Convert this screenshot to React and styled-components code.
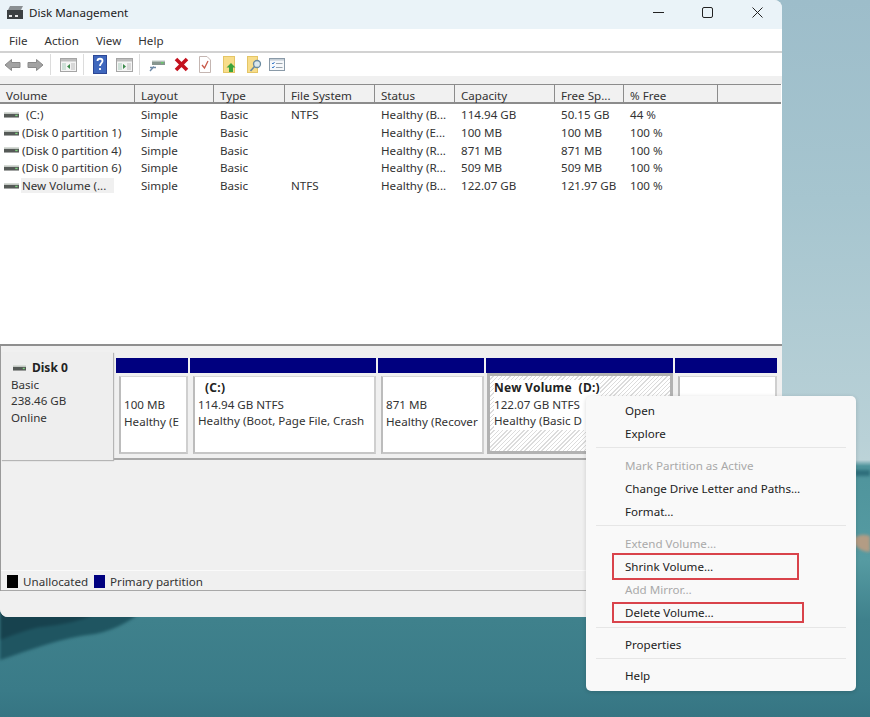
import React from 'react';
import styled, { createGlobalStyle } from 'styled-components';

const GlobalStyle = createGlobalStyle`
    html, body {
        margin: 0;
        padding: 0;
    }
    body {
        font-family: "Noto Sans", "Open Sans", "Liberation Sans", sans-serif;
        font-size: 11.6px;
        color: #222;
    }
`;

const Desktop = styled.div`
    position: relative;
    width: 870px;
    height: 717px;
    overflow: hidden;
    background: linear-gradient(180deg, #9dbdca 0, #a6c5cf 200px, #b9d1d7 440px, #bcd3d8 460px, #4f949c 466px, #569ba2 560px, #3f818c 620px, #3a7b88 690px, #367583 717px);
`;

const Scenery = styled.svg`
    position: absolute;
    left: 0;
    top: 0;
    filter: blur(1.5px);
`;

const Window = styled.div`
    position: relative;
    width: 782px;
    height: 617px;
    display: flex;
    flex-direction: column;
    background: #f0f0f0;
    border-radius: 0 8px 8px 8px;
    overflow: hidden;
`;

const TitleBar = styled.div`
    height: 25px;
    padding: 0 0 4px 7px;
    display: flex;
    align-items: center;
    background: #eaf3f8;
    color: #1c1c1c;
`;

const TitleText = styled.span`
    margin-left: 5px;
    flex: 1;
`;

const WindowButton = styled.div`
    width: 49.5px;
    display: flex;
    justify-content: center;
    align-items: center;
`;

const MenuBar = styled.div`
    height: 21px;
    padding: 1px 0 0 9px;
    display: flex;
    align-items: center;
    gap: 17px;
    background: #fff;
    border-bottom: 2px solid #d2d2d2;
    color: #333;
`;

const Toolbar = styled.div`
    height: 23px;
    display: flex;
    align-items: center;
    padding-left: 4px;
    background: #fff;
`;

const ToolIcon = styled.svg`
    display: block;
    margin-right: ${(p) => p.$gap || 0}px;
    flex: none;
`;

const ToolSep = styled.div`
    width: 1px;
    height: 21px;
    background: #dcdcdc;
    margin-right: 9px;
`;

const ListPane = styled.div`
    margin-top: 8px;
    height: 260px;
    background: #fff;
    border-bottom: 2px solid #8f8f8f;
`;

const Header = styled.div`
    height: 17px;
    display: flex;
    background: #f1f1f1;
    border-top: 1px solid #8c8c8c;
    border-bottom: 2px solid #8c8c8c;
    margin-right: 1px;
`;

const HeaderCell = styled.div`
    width: ${(p) => p.$w}px;
    padding: 4px 0 0 6px;
    box-sizing: border-box;
    border-right: 1px solid #8c8c8c;
    line-height: 13px;
    white-space: nowrap;
    color: #333;
    &:last-child { border-right: 0; flex: 1; }
`;

const Rows = styled.div`
    padding-top: 2px;
`;

const Row = styled.div`
    height: 17.7px;
    display: flex;
    align-items: center;
    color: #333;
`;

const Cell = styled.div`
    width: ${(p) => p.$w}px;
    padding-left: 6px;
    box-sizing: border-box;
    white-space: nowrap;
    overflow: hidden;
    &:first-child {
        padding-left: 4px;
        display: flex;
        align-items: center;
    }
`;

const VolumeName = styled.span`
    padding: 0 ${(p) => (p.$selected ? 8 : 3)}px 0 1px;
    margin-left: ${(p) => (p.$indent ? 6 : 2)}px;
    background: ${(p) => (p.$selected ? '#f0f0f0' : 'transparent')};
`;

const DiskIcon = styled.svg`
    display: block;
    flex: none;
`;

const GraphPane = styled.div`
    flex: 1;
    display: flex;
    flex-direction: column;
    border-left: 1px solid #9a9a9a;
`;

const DiskRow = styled.div`
    margin-top: 6px;
    height: 106px;
    display: flex;
    border-bottom: 2px solid #a8a8a8;
`;

const DiskLabel = styled.div`
    flex: none;
    width: 112px;
    height: 108px;
    padding: 8px 0 0 10px;
    box-sizing: border-box;
    background: #eeeeee;
    box-shadow: 1px 1px 1px #b5b5b5;
    line-height: 16.7px;
    color: #333;
    margin-right: 3px;
`;

const DiskTitle = styled.div`
    display: flex;
    align-items: center;
    font-weight: 700;
    font-size: 12px;
    color: #222;
    gap: 6px;
    margin-left: 2px;
`;

const Partitions = styled.div`
    display: flex;
    gap: 2px;
    padding-top: 6px;
`;

const Partition = styled.div`
    width: ${(p) => p.$w}px;
    display: flex;
    flex-direction: column;
`;

const PartitionBar = styled.div`
    height: 15px;
    background: #00007f;
`;

const PartitionBody = styled.div`
    box-sizing: border-box;
    margin: 3px 0 0 3px;
    height: 78px;
    padding: ${(p) => (p.$top ? 3 : 20)}px 0 0 3px;
    border-style: solid;
    border-color: #d8d8d8 #cfcfcf #c6c6c6 #bcbcbc;
    border-width: 1px 2px 2px 2px;
    background: #fff;
    line-height: 16.7px;
    color: #333;
    white-space: nowrap;
    overflow: hidden;
`;

const SelectedBody = styled.div`
    box-sizing: border-box;
    margin: 0 0 0 1px;
    height: 81px;
    padding: 4px 0 0 4px;
    border: 3px solid #b2b2b2;
    background: repeating-linear-gradient(135deg, #fff 0, #fff 2px, #dcdcdc 2px, #dcdcdc 3px);
    line-height: 16.7px;
    color: #333;
    white-space: nowrap;
    overflow: hidden;
`;

const PartitionName = styled.div`
    font-weight: 700;
    font-size: 12px;
    letter-spacing: 0.25px;
    color: #222;
    padding-left: ${(p) => p.$pad || 0}px;
`;

const HatchText = styled.div`
    display: table;
    background: #fff;
`;

const Spacer = styled.div`
    flex: 1;
`;

const Legend = styled.div`
    height: 18px;
    padding: 1px 0 0 6px;
    display: flex;
    align-items: center;
    color: #333;
    border-top: 1px solid #fafafa;
    border-bottom: 1px solid #a8a8a8;
`;

const Swatch = styled.span`
    width: 11px;
    height: 13px;
    background: ${(p) => p.$color};
    margin: 0 5px 0 ${(p) => p.$left || 0}px;
`;

const StatusBar = styled.div`
    height: 26px;
    background: #f0f0f0;
`;

const ContextMenu = styled.div`
    position: absolute;
    left: 586px;
    top: 396px;
    width: 270px;
    height: 295px;
    box-sizing: border-box;
    padding-top: 3px;
    background: #f9f9f9;
    border-radius: 5px;
    box-shadow: 0 1px 4px rgba(0, 0, 0, 0.16);
`;

const MenuItem = styled.div`
    height: 23px;
    line-height: 23px;
    padding-left: 39px;
    color: ${(p) => (p.$disabled ? '#a9a9a9' : '#222')};
`;

const MenuSep = styled.div`
    height: 1px;
    margin: ${(p) => p.$m || '2px 10px 6px'};
    background: #e6e6e6;
`;

const Highlight = styled.div`
    position: absolute;
    left: 26px;
    top: ${(p) => p.$top}px;
    width: ${(p) => p.$w}px;
    height: ${(p) => p.$h}px;
    box-sizing: border-box;
    border: 2px solid #d9434b;
`;

const columns = [135, 79, 71, 90, 80, 100, 69, 94, 63];
const headers = ['Volume', 'Layout', 'Type', 'File System', 'Status', 'Capacity', 'Free Sp...', '% Free', ''];
const rows = [
    ['(C:)', 'Simple', 'Basic', 'NTFS', 'Healthy (B...', '114.94 GB', '50.15 GB', '44 %'],
    ['(Disk 0 partition 1)', 'Simple', 'Basic', '', 'Healthy (E...', '100 MB', '100 MB', '100 %'],
    ['(Disk 0 partition 4)', 'Simple', 'Basic', '', 'Healthy (R...', '871 MB', '871 MB', '100 %'],
    ['(Disk 0 partition 6)', 'Simple', 'Basic', '', 'Healthy (R...', '509 MB', '509 MB', '100 %'],
    ['New Volume (...', 'Simple', 'Basic', 'NTFS', 'Healthy (B...', '122.07 GB', '121.97 GB', '100 %'],
];

function Disk({ width = 15 }) {
    return (
        <DiskIcon width={width} height="6" viewBox="0 0 16 6.5" preserveAspectRatio="none">
            <rect x="0" y="0" width="16" height="2.5" fill="#d6dbd6" />
            <rect x="0" y="2" width="16" height="4" fill="#555a57" />
            <rect x="12" y="3" width="2.5" height="1.5" fill="#7fd27f" />
        </DiskIcon>
    );
}

function Toolbuttons() {
    return (
        <>
            <ToolIcon $gap={6} width="17" height="16" viewBox="0 0 17 16">
                <path d="M1 8 L7.5 2.5 V5.5 H16 V10.5 H7.5 V13.5 Z" fill="#a3a3a3" stroke="#8a8a8a" />
            </ToolIcon>
            <ToolIcon $gap={6} width="17" height="16" viewBox="0 0 17 16">
                <path d="M16 8 L9.5 2.5 V5.5 H1 V10.5 H9.5 V13.5 Z" fill="#a3a3a3" stroke="#8a8a8a" />
            </ToolIcon>
            <ToolSep />
            <ToolIcon $gap={6} width="17" height="14" viewBox="0 0 17 14">
                <rect x="0.5" y="0.5" width="16" height="13" fill="#f4f4f4" stroke="#a5a5a5" />
                <rect x="1" y="1" width="15" height="2.5" fill="#bdbdbd" />
                <rect x="2" y="5" width="4" height="7" fill="#cfe0d8" />
                <rect x="11" y="5" width="4" height="7" fill="#d8d8d8" />
                <path d="M10 6 L7 8.5 L10 11 Z" fill="#3a8a4a" />
            </ToolIcon>
            <ToolSep />
            <ToolIcon $gap={9} width="14" height="19" viewBox="0 0 14 19">
                <rect x="0.5" y="0.5" width="13" height="18" fill="#3f67bd" stroke="#2c4796" />
                <path d="M4.5 6 C4.5 3 9.5 3 9.5 6 C9.5 8 7 8.5 7 11 M7 13 V15" fill="none" stroke="#fff" strokeWidth="1.8" />
            </ToolIcon>
            <ToolIcon $gap={6} width="17" height="14" viewBox="0 0 17 14">
                <rect x="0.5" y="0.5" width="16" height="13" fill="#f4f4f4" stroke="#a5a5a5" />
                <rect x="1" y="1" width="15" height="2.5" fill="#bdbdbd" />
                <rect x="2" y="5" width="4" height="7" fill="#cfe0d8" />
                <rect x="11" y="5" width="4" height="7" fill="#d8d8d8" />
                <path d="M7 6 L10 8.5 L7 11 Z" fill="#3a8a4a" />
            </ToolIcon>
            <ToolSep />
            <ToolIcon $gap={9} width="16" height="14" viewBox="0 0 16 14">
                <rect x="3" y="2" width="13" height="5" fill="#87968f" />
                <rect x="3" y="2" width="13" height="1.5" fill="#dfe6e3" />
                <rect x="12" y="4" width="2.5" height="1.5" fill="#66cc66" />
                <path d="M1 13 L5 8.5 M1 9.5 H7" stroke="#6f8ba8" strokeWidth="1.4" fill="none" />
            </ToolIcon>
            <ToolIcon $gap={10} width="15" height="15" viewBox="0 0 15 15">
                <path d="M2 2 L13 13 M13 2 L2 13" stroke="#c4121f" strokeWidth="3.6" />
            </ToolIcon>
            <ToolIcon $gap={12} width="12" height="17" viewBox="0 0 12 17">
                <path d="M0.5 0.5 H8 L11.5 4 V16.5 H0.5 Z" fill="#fff" stroke="#c4b6b2" />
                <path d="M3 9 L5.5 12 L9 5" fill="none" stroke="#c85a4a" strokeWidth="1.3" />
            </ToolIcon>
            <ToolIcon $gap={11} width="13" height="17" viewBox="0 0 13 17">
                <rect x="0.5" y="0.5" width="11" height="16" fill="#f8dd8a" stroke="#e4c566" />
                <path d="M8 7 L12.5 11.5 H10 V16 H6 V11.5 H3.5 Z" fill="#3ca33c" />
            </ToolIcon>
            <ToolIcon $gap={7} width="15" height="17" viewBox="0 0 15 17">
                <rect x="0.5" y="0.5" width="10" height="16" fill="#f8dd8a" stroke="#e4c566" />
                <circle cx="10" cy="8" r="3.5" fill="#dbe8ee" stroke="#6a8aa0" strokeWidth="1.3" />
                <path d="M7.5 10.5 L3.5 15" stroke="#6a8aa0" strokeWidth="1.6" />
            </ToolIcon>
            <ToolIcon width="16" height="13" viewBox="0 0 16 13">
                <rect x="0.5" y="0.5" width="15" height="12" fill="#f6f8fa" stroke="#8a9aa8" />
                <rect x="1" y="1" width="14" height="1.6" fill="#c4ced6" />
                <path d="M3 5 L4 6 L5.5 4 M3 9 L4 10 L5.5 8" stroke="#3a7ac8" fill="none" />
                <path d="M7 5.5 H13.5 M7 9.5 H13.5" stroke="#9aa5ae" />
            </ToolIcon>
        </>
    );
}

export default function App() {
    return (
        <>
            <GlobalStyle />
            <Desktop>
                <Scenery width="870" height="717" viewBox="0 0 870 717">
                    <path d="M0 600 H155 C135 620 115 630 95 634 C60 638 30 650 0 660 Z" fill="#1f5561" />
                    <path d="M0 600 H110 C100 618 70 624 40 627 C25 630 10 636 0 640 Z" fill="#17424e" />
                    <path d="M855 470 H870 V476 H855 Z" fill="#2f6f7c" />
                    <path d="M852 540 C858 534 864 534 870 536 V552 C862 552 856 548 852 540 Z" fill="#b39c84" />
                </Scenery>
                <Window>
                    <TitleBar>
                        <svg width="17" height="14" viewBox="0 0 17 14">
                            <path d="M3 0 H16 L14 4 H1 Z" fill="#8a8f92" />
                            <rect x="0" y="4" width="16" height="9" fill="#3c4042" />
                            <rect x="2" y="9" width="3" height="2" fill="#e6e6e6" />
                            <rect x="8" y="9" width="3" height="2" fill="#e6e6e6" />
                        </svg>
                        <TitleText>Disk Management</TitleText>
                        <WindowButton>
                            <svg width="11" height="11" viewBox="0 0 11 11">
                                <path d="M0 5.5 H11" stroke="#222" strokeWidth="1" />
                            </svg>
                        </WindowButton>
                        <WindowButton>
                            <svg width="11" height="11" viewBox="0 0 11 11">
                                <rect x="0.5" y="0.5" width="10" height="10" rx="1.5" fill="none" stroke="#222" />
                            </svg>
                        </WindowButton>
                        <WindowButton>
                            <svg width="11" height="11" viewBox="0 0 11 11">
                                <path d="M0.5 0.5 L10.5 10.5 M10.5 0.5 L0.5 10.5" stroke="#222" />
                            </svg>
                        </WindowButton>
                    </TitleBar>
                    <MenuBar>
                        <span>File</span>
                        <span>Action</span>
                        <span>View</span>
                        <span>Help</span>
                    </MenuBar>
                    <Toolbar>
                        <Toolbuttons />
                    </Toolbar>
                    <ListPane>
                        <Header>
                            {headers.map((h, i) => (
                                <HeaderCell key={i} $w={columns[i]}>{h}</HeaderCell>
                            ))}
                        </Header>
                        <Rows>
                            {rows.map((r, i) => (
                                <Row key={i}>
                                    {r.map((c, j) =>
                                        j === 0 ? (
                                            <Cell key={j} $w={columns[j]}>
                                                <Disk />
                                                <VolumeName $indent={i === 0} $selected={i === 4}>{c}</VolumeName>
                                            </Cell>
                                        ) : (
                                            <Cell key={j} $w={columns[j]}>{c}</Cell>
                                        )
                                    )}
                                </Row>
                            ))}
                        </Rows>
                    </ListPane>
                    <GraphPane>
                        <DiskRow>
                            <DiskLabel>
                                <DiskTitle><Disk width={13} />Disk 0</DiskTitle>
                                <div>Basic</div>
                                <div>238.46 GB</div>
                                <div>Online</div>
                            </DiskLabel>
                            <Partitions>
                                <Partition $w={72}>
                                    <PartitionBar />
                                    <PartitionBody>
                                        <div>100 MB</div>
                                        <div>Healthy (E</div>
                                    </PartitionBody>
                                </Partition>
                                <Partition $w={186}>
                                    <PartitionBar />
                                    <PartitionBody $top>
                                        <PartitionName $pad={7}>(C:)</PartitionName>
                                        <div>114.94 GB NTFS</div>
                                        <div>Healthy (Boot, Page File, Crash</div>
                                    </PartitionBody>
                                </Partition>
                                <Partition $w={106}>
                                    <PartitionBar />
                                    <PartitionBody>
                                        <div>871 MB</div>
                                        <div>Healthy (Recover</div>
                                    </PartitionBody>
                                </Partition>
                                <Partition $w={187}>
                                    <PartitionBar />
                                    <SelectedBody>
                                        <HatchText>
                                            <PartitionName>New Volume&nbsp; (D:)</PartitionName>
                                            <div>122.07 GB NTFS</div>
                                            <div>Healthy (Basic D</div>
                                        </HatchText>
                                    </SelectedBody>
                                </Partition>
                                <Partition $w={102}>
                                    <PartitionBar />
                                    <PartitionBody />
                                </Partition>
                            </Partitions>
                        </DiskRow>
                        <Spacer />
                        <Legend>
                            <Swatch $color="#000" />
                            Unallocated
                            <Swatch $color="#00007f" $left={6} />
                            Primary partition
                        </Legend>
                    </GraphPane>
                    <StatusBar />
                </Window>
                <ContextMenu>
                    <MenuItem>Open</MenuItem>
                    <MenuItem>Explore</MenuItem>
                    <MenuSep />
                    <MenuItem $disabled>Mark Partition as Active</MenuItem>
                    <MenuItem>Change Drive Letter and Paths…</MenuItem>
                    <MenuItem>Format…</MenuItem>
                    <MenuSep />
                    <MenuItem $disabled>Extend Volume…</MenuItem>
                    <MenuItem>Shrink Volume…</MenuItem>
                    <MenuItem $disabled>Add Mirror…</MenuItem>
                    <MenuItem>Delete Volume…</MenuItem>
                    <MenuSep $m="3px 10px 5px" />
                    <MenuItem>Properties</MenuItem>
                    <MenuSep $m="2px 10px 5px" />
                    <MenuItem>Help</MenuItem>
                    <Highlight $top={157} $w={187} $h={27} />
                    <Highlight $top={206} $w={192} $h={21} />
                </ContextMenu>
            </Desktop>
        </>
    );
}
